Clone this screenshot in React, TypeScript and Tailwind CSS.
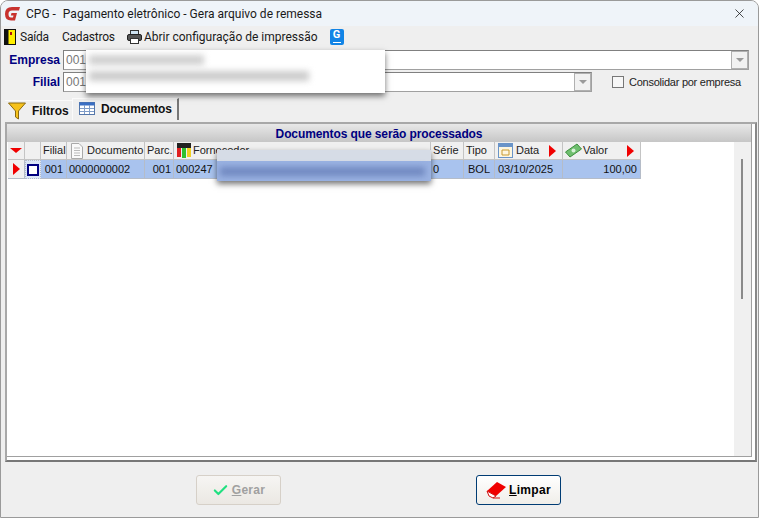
import { X, Check } from 'lucide-react';

const grid =
  'grid grid-cols-[17px_16px_26px_78px_29px_257px_33px_31px_68px_78px] w-[633px]';

function RedLeft() {
  return <span className="w-0 h-0 border-y-[6px] border-y-transparent border-l-[7px] border-l-[#f00000]" />;
}

function Head({ children, className = '' }: { children?: React.ReactNode; className?: string }) {
  return (
    <div className={`h-[18px] flex items-center bg-[#f0f0f0] border-r border-b border-[#c4c4c4] text-[11px] text-[#222] whitespace-nowrap overflow-hidden ${className}`}>
      {children}
    </div>
  );
}

function Cell({ children, className = '' }: { children?: React.ReactNode; className?: string }) {
  return (
    <div className={`h-[19px] flex items-center bg-[#a9c3ee] border-r border-b border-[#b5bcc8] text-[11px] text-[#111] whitespace-nowrap overflow-hidden ${className}`}>
      {children}
    </div>
  );
}

function DropArrow() {
  return (
    <div className="w-[17px] h-[18px] shrink-0 flex items-center justify-center bg-[#f1f1f1] border border-[#b0b0b0]">
      <span className="w-0 h-0 border-x-[4px] border-x-transparent border-t-[4px] border-t-[#9a9a9a]" />
    </div>
  );
}

function Eraser() {
  return (
    <svg width="21" height="18" viewBox="0 0 21 18">
      <path d="M1 10 L11 1 L20 6 L10 15 Z" fill="#f00000" />
      <path d="M1 10 L10 15 L7 17 L3 15 Z" fill="#fff" stroke="#d01010" />
      <path d="M7 17 H14" stroke="#d01010" />
    </svg>
  );
}

export default function App() {
  return (
    <div className="w-[759px] h-[518px] flex flex-col bg-[#efefef] border border-[#9a9a9a] rounded-t-lg overflow-hidden relative font-['Liberation_Sans',sans-serif]">
      {/* titulo */}
      <div className="h-[25px] shrink-0 flex items-center bg-[#eff4f9] pl-[3px] pr-[11px] text-[12px] text-[#1a1a1a] font-['Roboto',sans-serif]">
        <svg width="17" height="17" viewBox="0 0 17 17" className="mr-[5px]">
          <path d="M16 2 H8 Q1 2 1 9 Q1 15.5 7 15.5 H11 L13 8 H7.5 L6.8 10.5 H9.5 L9 12.5 H7 Q4.5 12.5 4.5 9 Q4.5 5.5 8 5.5 H15 Z" fill="#c8322e" />
        </svg>
        <span>CPG -</span>
        <span className="ml-[7px]">Pagamento eletrônico - Gera arquivo de remessa</span>
        <X size={15} strokeWidth={1.2} className="ml-auto text-[#111]" />
      </div>

      {/* barra de ferramentas */}
      <div className="h-[21px] shrink-0 flex items-center pl-[3px] text-[12px] text-[#1a1a1a] font-['Roboto',sans-serif]">
        <svg width="12" height="16" viewBox="0 0 12 16" className="mr-[4px]">
          <rect x="0.5" y="0.5" width="11" height="15" fill="#ffee00" stroke="#111" />
          <rect x="0.5" y="0.5" width="4" height="15" fill="#111" />
          <rect x="6" y="3" width="2" height="3" fill="#b01010" />
        </svg>
        <span className="tracking-[-0.2px]">Saída</span>
        <span className="ml-[13px] tracking-[-0.2px]">Cadastros</span>
        <svg width="15" height="14" viewBox="0 0 15 14" className="ml-[12px] mr-[2px]">
          <rect x="3.5" y="0.5" width="8" height="5" fill="#cfe3f2" stroke="#333" />
          <rect x="0.5" y="4.5" width="14" height="6" rx="1.5" fill="#555" stroke="#222" />
          <rect x="3.5" y="8.5" width="8" height="5" fill="#fff" stroke="#333" />
        </svg>
        <span>Abrir configuração de impressão</span>
        <div className="ml-[12px] w-[14px] h-[16px] rounded-[2px] bg-[#1184e6] flex flex-col items-center text-white text-[11px] font-bold leading-[12px]">
          G
          <span className="w-[8px] h-[1px] bg-white mt-[1px]" />
        </div>
      </div>

      {/* campos */}
      <div className="pt-[3px] pr-[9px] flex flex-col gap-[2px] shrink-0">
        <div className="flex items-center h-[20px]">
          <span className="w-[59px] shrink-0 text-right text-[12px] font-bold text-[#000080]">Empresa</span>
          <div className="ml-[3px] flex-1 h-[20px] flex items-center justify-between bg-white border border-[#a0a0a0] border-t-[#808080] border-l-[#808080] text-[12px] text-[#777] pl-[2px]">
            <span>001</span>
            <DropArrow />
          </div>
        </div>
        <div className="flex items-center h-[20px]">
          <span className="w-[59px] shrink-0 text-right text-[12px] font-bold text-[#000080]">Filial</span>
          <div className="ml-[3px] w-[529px] shrink-0 h-[20px] flex items-center justify-between bg-white border border-[#a0a0a0] border-t-[#808080] border-l-[#808080] text-[12px] text-[#777] pl-[2px]">
            <span>001</span>
            <DropArrow />
          </div>
          <div className="ml-[20px] w-[12px] h-[12px] shrink-0 bg-[#f7f7f7] border border-[#777]" />
          <span className="ml-[5px] text-[11px] tracking-[-0.25px] text-[#222] whitespace-nowrap">Consolidar por empresa</span>
        </div>
      </div>

      {/* abas */}
      <div className="h-[22px] mt-[6px] shrink-0 flex items-end pl-[4px] text-[12px] font-bold text-[#111]">
        <div className="h-[20px] w-[67px] flex items-center gap-[6px] pl-[3px] border-t border-[#fafafa]">
          <svg width="18" height="18" viewBox="0 0 18 18">
            <path d="M0.5 1 H17.5 L10.5 9 V17 L7.5 15 V9 Z" fill="#f6c21c" stroke="#8a6a10" />
          </svg>
          <span>Filtros</span>
        </div>
        <div className="h-[22px] w-[107px] flex items-center gap-[6px] pl-[6px] pb-[2px] bg-[#efefef] border-t border-l border-[#fafafa] border-r-2 border-r-[#777]">
          <svg width="16" height="13" viewBox="0 0 16 13">
            <rect x="0.5" y="0.5" width="15" height="12" fill="#fff" stroke="#5577aa" />
            <rect x="0.5" y="0.5" width="15" height="3" fill="#3a6fc4" />
            <path d="M5.5 3 V12 M10.5 3 V12 M1 6.5 H15 M1 9.5 H15" stroke="#7f9cc8" />
          </svg>
          <span className="tracking-[-0.2px]">Documentos</span>
        </div>
      </div>

      {/* painel */}
      <div className="ml-[4px] mr-[1px] mt-[2px] h-[340px] shrink-0 bg-white border-t-2 border-l-2 border-[#a8a8a8] border-r-2 border-r-[#888] border-b-2 border-b-[#777] pr-[3px] pb-[3px] flex flex-col">
        <div className="flex-1 min-h-0 flex flex-col border-r border-b border-[#a0a0a0]">
          <div className="h-[18px] shrink-0 flex items-center justify-center pt-[1px] bg-gradient-to-b from-[#e8e8e8] to-[#c6c6c6] text-[12px] font-bold tracking-[-0.1px] text-[#000080]">
            Documentos que serão processados
          </div>
          <div className="flex flex-1 min-h-0">
            <div className="flex-1 pl-px">
              <div className={grid}>
                <Head className="justify-center">
                  <span className="w-0 h-0 border-x-[6px] border-x-transparent border-t-[5px] border-t-[#f00000]" />
                </Head>
                <Head />
                <Head className="pl-[2px]">Filial</Head>
                <Head className="pl-[3px] gap-[3px]">
                  <svg width="14" height="16" viewBox="0 0 14 16" className="shrink-0">
                    <path d="M1.5 0.5 H9 L12.5 4 V15.5 H1.5 Z" fill="#fafafa" stroke="#aaa" />
                    <path d="M4 5 H10 M4 7.5 H10 M4 10 H10 M4 12.5 H10" stroke="#bbb" />
                  </svg>
                  Documento
                </Head>
                <Head className="pl-[2px]">Parc.</Head>
                <Head className="pl-[2px] gap-[1px]">
                  <svg width="16" height="16" viewBox="0 0 16 16" className="shrink-0">
                    <rect x="1" y="0" width="14" height="5" fill="#222" />
                    <rect x="1" y="5" width="4" height="9" fill="#e02020" />
                    <rect x="6" y="5" width="4" height="10" fill="#30c030" />
                    <rect x="11" y="5" width="4" height="9" fill="#f0d020" />
                  </svg>
                  Fornecedor
                </Head>
                <Head className="pl-[2px]">Série</Head>
                <Head className="pl-[2px]">Tipo</Head>
                <Head className="pl-[3px] gap-[3px]">
                  <svg width="15" height="15" viewBox="0 0 15 15" className="shrink-0">
                    <rect x="0.5" y="0.5" width="14" height="14" fill="#fdf6e0" stroke="#6a94c8" />
                    <rect x="1" y="1" width="13" height="3" fill="#6a94c8" />
                    <path d="M4 7 H11 V12 H4 Z" fill="none" stroke="#c89a30" />
                  </svg>
                  Data
                  <span className="ml-auto mr-[6px] flex"><RedLeft /></span>
                </Head>
                <Head className="pl-[2px] gap-[1px]">
                  <svg width="17" height="15" viewBox="0 0 17 15" className="shrink-0">
                    <path d="M0.5 9 L12 1 L16.5 6 L5 14 Z" fill="#6fbf6f" stroke="#3f8f3f" />
                    <circle cx="8.5" cy="7.5" r="2" fill="#d8f0d8" />
                  </svg>
                  Valor
                  <span className="ml-auto mr-[6px] flex"><RedLeft /></span>
                </Head>

                <Cell className="justify-center !bg-[#f0f0f0]"><RedLeft /></Cell>
                <Cell className="justify-center !bg-[#dbe6f6] border border-dotted border-[#1030c0]">
                  <span className="w-[12px] h-[12px] bg-white border-2 border-[#000080]" />
                </Cell>
                <Cell className="justify-end pr-[3px]">001</Cell>
                <Cell className="pl-[2px]">0000000002</Cell>
                <Cell className="justify-end pr-[2px]">001</Cell>
                <Cell className="pl-[2px]">000247</Cell>
                <Cell className="pl-[2px]">0</Cell>
                <Cell className="justify-center">BOL</Cell>
                <Cell className="pl-[3px]">03/10/2025</Cell>
                <Cell className="justify-end pr-[3px]">100,00</Cell>
              </div>
            </div>
            {/* rolagem */}
            <div className="w-[17px] shrink-0 bg-[#f0f0f0] pt-[17px] pl-[7px]">
              <div className="w-[2px] h-[140px] bg-[#8a8a8a]" />
            </div>
          </div>
        </div>
      </div>

      {/* rodape */}
      <div className="flex-1 flex items-start pt-[13px] pl-[195px] text-[12px] font-bold tracking-[0.3px]">
        <button className="w-[85px] h-[30px] flex items-center justify-center gap-[3px] rounded-[3px] border border-[#d6d0c8] bg-gradient-to-b from-[#f6f5f3] to-[#ebe8e3] text-[#a0a0a0]">
          <Check size={17} strokeWidth={3} className="text-[#20e080]" />
          <span><span className="underline">G</span>erar</span>
        </button>
        <button className="ml-[195px] w-[85px] h-[30px] flex items-center justify-center gap-[2px] rounded-[3px] border border-[#003c74] bg-gradient-to-b from-white to-[#f0eee9] text-black">
          <Eraser />
          <span><span className="underline">L</span>impar</span>
        </button>
      </div>

      {/* tarjas borradas */}
      <div className="absolute left-[85px] top-[49px] w-[299px] h-[43px] bg-white shadow-[0_3px_6px_rgba(0,0,0,0.55)] flex flex-col gap-[6px] pt-[5px] pl-[3px]">
        <div className="w-[115px] h-[10px] bg-[#d0d0d0] blur-[3px]" />
        <div className="w-[220px] h-[10px] bg-[#cccccc] blur-[3px]" />
      </div>
      <div className="absolute left-[216px] top-[149px] w-[214px] h-[31px] bg-[#d6dce6] shadow-[0_3px_6px_rgba(0,0,0,0.55)] flex items-end overflow-hidden">
        <div className="w-full h-[20px] bg-[#9ab2e2] flex items-center pl-[3px]">
          <div className="w-[205px] h-[9px] bg-[#7088c0] blur-[3px]" />
        </div>
      </div>
    </div>
  );
}
